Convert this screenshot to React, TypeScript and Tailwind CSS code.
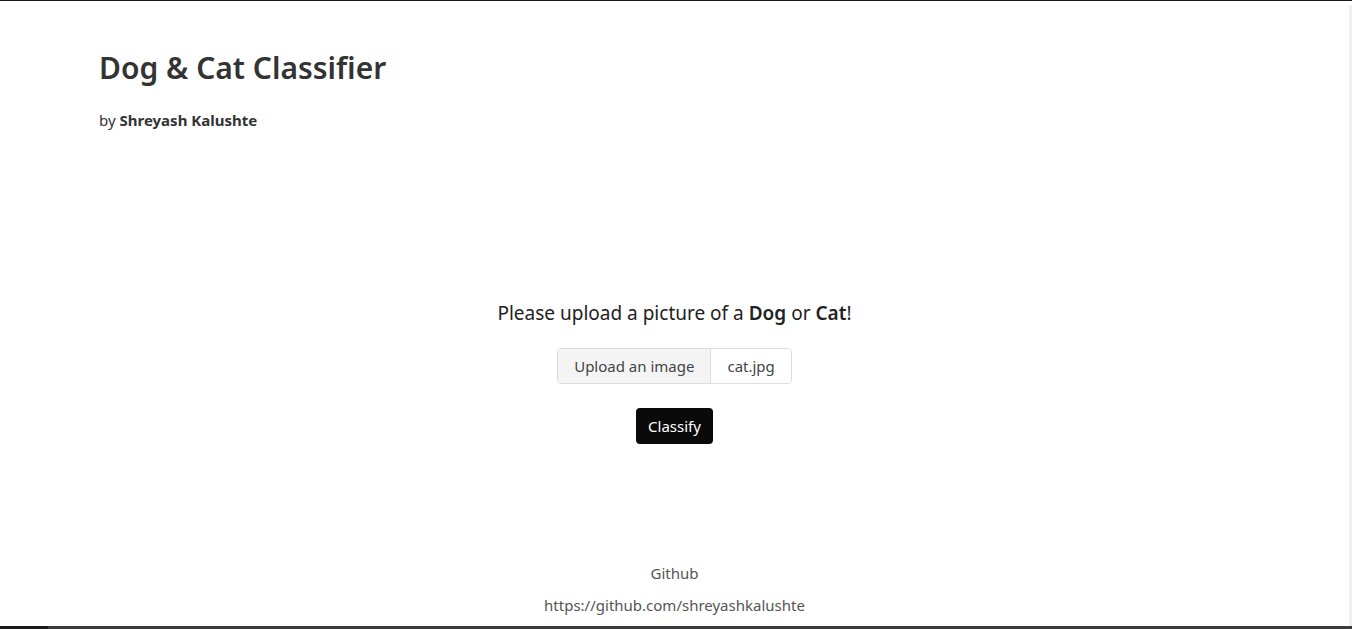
export default function App() {
  return (
    <div
      className="flex h-[629px] w-full flex-col overflow-hidden bg-white text-[#333]"
      style={{ fontFamily: '"Noto Sans", "Open Sans", sans-serif' }}
    >
      <div className="h-px w-full shrink-0 bg-[#1a1a1a]" />
      <div className="flex min-h-0 flex-1">
        <main className="flex flex-1 flex-col">
          <header className="pl-[99px] pt-[47px]">
            <h1 className="text-[30px] font-semibold leading-[40px] text-[#333]">Dog &amp; Cat Classifier</h1>
            <p className="mt-[22px] text-[15px] leading-[20px] text-[#333]">
              by <span className="font-bold">Shreyash Kalushte</span>
            </p>
          </header>

          <section className="mt-[170px] flex flex-col items-center">
            <p className="text-[19px] leading-[26px] text-[#222]">
              Please upload a picture of a <span className="font-semibold">Dog</span> or{" "}
              <span className="font-semibold">Cat</span>!
            </p>
            <div className="mt-[22px] flex h-[36px] overflow-hidden rounded-[4px] border border-[#dcdcdc] text-[15px] text-[#444]">
              <label className="flex items-center border-r border-[#dcdcdc] bg-[#f4f4f4] px-4">Upload an image</label>
              <span className="flex items-center bg-white px-4">cat.jpg</span>
            </div>
            <button className="mt-[24px] h-[36px] rounded-[4px] bg-[#0a0a0a] px-3 text-[15px] text-white">Classify</button>
          </section>

          <footer className="mt-auto flex flex-col items-center pb-[10px] text-[15px] text-[#555]">
            <span className="leading-[22px]">Github</span>
            <span className="mt-[10px] leading-[22px]">https://github.com/shreyashkalushte</span>
          </footer>
        </main>
        <div className="mt-1 w-[3px] shrink-0 bg-[#f0f0f0]" />
      </div>
      <div className="flex h-[3px] w-full shrink-0">
        <div className="w-[48px] bg-[#1a1a1a]" />
        <div className="flex-1 bg-[#3a3a3a]" />
      </div>
    </div>
  );
}
